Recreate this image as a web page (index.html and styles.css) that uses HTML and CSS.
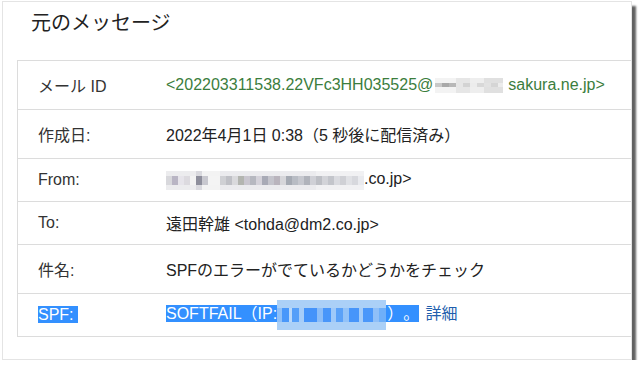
FILE: index.html
```html
<!DOCTYPE html>
<html lang="ja">
<head>
<meta charset="utf-8">
<title>元のメッセージ</title>
<link rel="stylesheet" href="styles.css">
</head>
<body>
<div class="card">
  <h1 class="title">元のメッセージ</h1>
  <div class="table">
    <div class="row">
      <div class="label">メール ID</div>
      <div class="value id">&lt;202203311538.22VFc3HH035525@<span class="blur blur-id"></span>sakura.ne.jp&gt;</div>
    </div>
    <div class="row">
      <div class="label">作成日:</div>
      <div class="value">2022年4月1日 0:38（5 秒後に配信済み）</div>
    </div>
    <div class="row short">
      <div class="label">From:</div>
      <div class="value"><span class="blur blur-from"></span>.co.jp&gt;</div>
    </div>
    <div class="row short">
      <div class="label">To:</div>
      <div class="value">遠田幹雄 &lt;tohda@dm2.co.jp&gt;</div>
    </div>
    <div class="row">
      <div class="label">件名:</div>
      <div class="value">SPFのエラーがでているかどうかをチェック</div>
    </div>
    <div class="row short">
      <div class="label"><span class="sel sel-label">SPF:</span></div>
      <div class="value"><span class="sel">SOFTFAIL（IP:<span class="blur blur-ip"></span>）。</span> <a class="link" href="#">詳細</a></div>
    </div>
  </div>
</div>
</body>
</html>
```

FILE: styles.css
```css
html, body {
  margin: 0;
  padding: 0;
  background: #ffffff;
}

body {
  font-family: "Liberation Sans", "Noto Sans CJK JP", sans-serif;
  font-size: 16px;
  color: #222222;
  text-spacing-trim: space-all;
}

.card {
  box-sizing: border-box;
  width: 630px;
  height: 359px;
  margin: 1px 0 0 2px;
  padding-top: 7px;
  background: #ffffff;
  border: 1px solid #e4e4e4;
  box-shadow: 4px 5px 2px rgba(0, 0, 0, 0.62);
  overflow: hidden;
}

.title {
  margin: 0 0 23px 0;
  padding-left: 28px;
  font-size: 20px;
  line-height: 28px;
  font-weight: normal;
  color: #222222;
}

.table {
  width: 640px;
  margin-left: 14px;
  border-left: 1px solid #dcdcdc;
  border-bottom: 1px solid #dcdcdc;
}

.row {
  box-sizing: border-box;
  height: 49px;
  display: grid;
  grid-template-columns: 148px 1fr;
  align-items: center;
  border-top: 1px solid #dcdcdc;
}

.row.short {
  height: 43px;
}

.label {
  padding-left: 20px;
  color: #333333;
  white-space: nowrap;
}

.value {
  white-space: nowrap;
  color: #222222;
}

.value.id {
  color: #3b7d3d;
}

.link {
  color: #1f5fae;
  text-decoration: none;
  margin-left: 2px;
}

.sel {
  background: #3390ff;
  color: #ffffff;
}

.sel-label {
  padding-right: 4px;
}

.blur {
  display: inline-block;
  vertical-align: middle;
}

.blur-id {
  width: 68px;
  height: 15px;
  margin: 0 5px 0 2px;
  background:
    linear-gradient(90deg, #c8c8c8 0 7px, #a9a9a9 7px 14px, #b8b8b8 14px 21px, #e6e6e6 21px 28px, #d3d3d3 28px 35px, #ececec 35px 42px, #d8d8d8 42px 49px, #e2e2e2 49px 56px, #d5d5d5 56px 63px, #ececec 63px) 0 5px / 100% 4px no-repeat,
    linear-gradient(90deg, #f3f3f3 0 21px, #e6e6e6 21px 35px, #eeeeee 35px 49px, #e0e0e0 49px) 0 0 / 100% 15px no-repeat;
}

.blur-from {
  width: 198px;
  height: 19px;
  background:
    linear-gradient(90deg, #d8d8dc 0 6px, #b9b5c4 6px 12px, #e6e4ea 12px 18px, #dcdadf 18px 24px, #f2f2f2 24px 30px, #8e8f9c 30px 36px, #c8c8cf 36px 42px, #f4f4f4 42px 54px, #cfd0d4 54px 60px, #bfc0c6 60px 66px, #d9d9dc 66px 72px, #b3b5b0 72px 78px, #c9c6cf 78px 84px, #b6b8c0 84px 90px, #d4d2da 90px 96px, #a8aab6 96px 102px, #c4c4cc 102px 108px, #b9b4bd 108px 114px, #d6d6da 114px 120px, #a5aab3 120px 126px, #b8bcc4 126px 132px, #c6c8cf 132px 138px, #b0b3bb 138px 144px, #cfd0d6 144px 150px, #bdbfc5 150px 156px, #d2d3d8 156px 162px, #c3c5cb 162px 168px, #dadbe0 168px 174px, #cfd0d5 174px 180px, #e0e1e5 180px 186px, #d7d8dd 186px 192px, #e9eaee 192px) 0 5px / 100% 9px no-repeat,
    linear-gradient(90deg, #ececee 0 30px, #d9d9de 30px 36px, #f3f3f3 36px 54px, #ebebee 54px 150px, #f1f1f3 150px) 0 0 / 100% 19px no-repeat;
}

.blur-ip {
  width: 109px;
  height: 30px;
  margin-right: 1px;
  background:
    linear-gradient(90deg, #8fc0f8 0 5px, #4897fa 5px 12px, #b9d8fa 12px 15px, #559ff9 15px 22px, #a6cdf9 22px 27px, #4493fa 27px 40px, #8bbdf8 40px 46px, #4896fa 46px 54px, #9fc9f9 54px 59px, #5aa1f8 59px 66px, #92c2f8 66px 72px, #4795fa 72px 82px, #a4ccf9 82px 86px, #4a97fa 86px 96px, #8fbff8 96px 102px, #6eaff9 102px) 0 8px / 100% 14px no-repeat,
    #abd0f7;
}
```
